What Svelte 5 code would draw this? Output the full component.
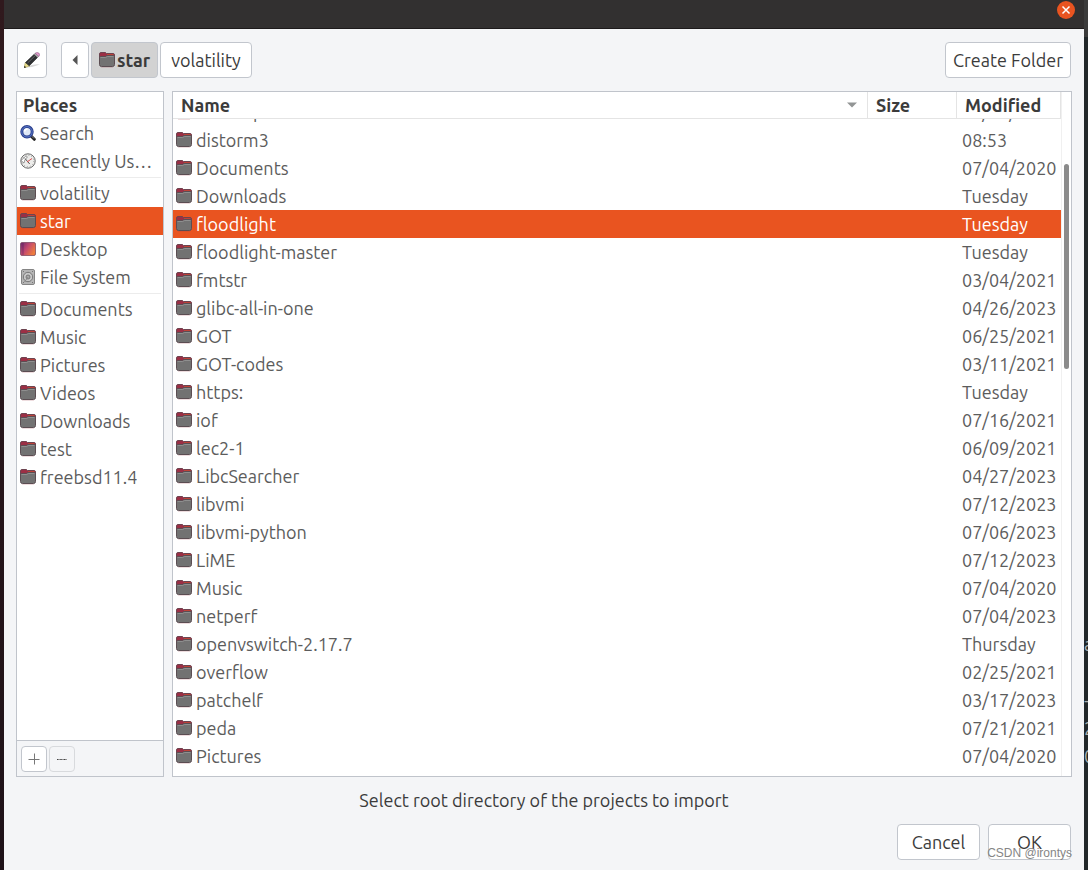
<script lang="ts">
    import {onMount} from "svelte";

    type Place = { name: string; icon: string };
    type Entry = { name: string; modified: string };

    const places: Place[][] = [
        [
            {name: "Search", icon: "search"},
            {name: "Recently Used", icon: "recent"},
        ],
        [
            {name: "volatility", icon: "folder"},
            {name: "star", icon: "folder"},
            {name: "Desktop", icon: "desktop"},
            {name: "File System", icon: "disk"},
        ],
        [
            {name: "Documents", icon: "folder"},
            {name: "Music", icon: "folder"},
            {name: "Pictures", icon: "folder"},
            {name: "Videos", icon: "folder"},
            {name: "Downloads", icon: "folder"},
            {name: "test", icon: "folder"},
            {name: "freebsd11.4", icon: "folder"},
        ],
    ];

    const entries: Entry[] = [
        {name: "Desktop", modified: "07/04/2020"},
        {name: "distorm3", modified: "08:53"},
        {name: "Documents", modified: "07/04/2020"},
        {name: "Downloads", modified: "Tuesday"},
        {name: "floodlight", modified: "Tuesday"},
        {name: "floodlight-master", modified: "Tuesday"},
        {name: "fmtstr", modified: "03/04/2021"},
        {name: "glibc-all-in-one", modified: "04/26/2023"},
        {name: "GOT", modified: "06/25/2021"},
        {name: "GOT-codes", modified: "03/11/2021"},
        {name: "https:", modified: "Tuesday"},
        {name: "iof", modified: "07/16/2021"},
        {name: "lec2-1", modified: "06/09/2021"},
        {name: "LibcSearcher", modified: "04/27/2023"},
        {name: "libvmi", modified: "07/12/2023"},
        {name: "libvmi-python", modified: "07/06/2023"},
        {name: "LiME", modified: "07/12/2023"},
        {name: "Music", modified: "07/04/2020"},
        {name: "netperf", modified: "07/04/2023"},
        {name: "openvswitch-2.17.7", modified: "Thursday"},
        {name: "overflow", modified: "02/25/2021"},
        {name: "patchelf", modified: "03/17/2023"},
        {name: "peda", modified: "07/21/2021"},
        {name: "Pictures", modified: "07/04/2020"},
    ];

    let place = $state("star");
    let selected = $state("floodlight");
    let scroller: HTMLDivElement;

    onMount(() => {
        scroller.scrollTop = scroller.scrollHeight;
    });
</script>

{#snippet icon(kind: string)}
    <svg class="icon" viewBox="0 0 16 16" aria-hidden="true">
        {#if kind === "folder"}
            <path d="M.5 6V2Q.5.5 2 .5h4.500l1 1H14q1.500 0 1.500 1.500v3z" fill="#9b2f45" stroke="#6d4450"/>
            <path d="M8 2.500h6.500v1H8z" fill="#e0562c"/>
            <path d="M.5 5.500Q.5 4.500 1.500 4.500h5L8 3.500h6.500q1 0 1 1V12.500q0 2-2 2h-11q-2 0-2-2z" fill="#727272" stroke="#5b4d52"/>
            <path d="M1.500 5.500h5.300L8.300 4.500h6.200" fill="none" stroke="#8f8f8f"/>
            <path d="M2 15.500h12" stroke="#a04050" stroke-opacity=".18"/>
        {:else if kind === "search"}
            <path d="M11 11l3.300 3.300" stroke="#222" stroke-width="3" stroke-linecap="round"/>
            <path d="M11.500 11l2.500 2.500" stroke="#888" stroke-width="1"/>
            <circle cx="7" cy="6.8" r="5.2" fill="#dfe8f7" stroke="#2b3f8c" stroke-width="3"/>
            <circle cx="7" cy="6.8" r="5.2" fill="none" stroke="#5a7acb" stroke-width="1"/>
            <path d="M4.500 6.500Q5 4 7.500 4" fill="none" stroke="#fff" stroke-width="1.500"/>
        {:else if kind === "recent"}
            <circle cx="8" cy="8" r="7.200" fill="#ededeb" stroke="#6b6b6b"/>
            <circle cx="8" cy="8" r="5.800" fill="none" stroke="#999" stroke-dasharray="1 2"/>
            <path d="M1 7.500L5.500 3.500l2 .6L5 6.500 4 10z" fill="#fff" stroke="#777" stroke-width=".7"/>
            <path d="M5 5.500L8 9l1.700 2" fill="none" stroke="#555"/>
            <path d="M7 9L12 5.500" stroke="#dc5050"/>
        {:else if kind === "desktop"}
            <defs>
                <linearGradient id="desk" x2="1" y2=".6">
                    <stop offset="0" stop-color="#6b286f"/>
                    <stop offset=".5" stop-color="#c3496f"/>
                    <stop offset="1" stop-color="#ef7d3d"/>
                </linearGradient>
            </defs>
            <rect x=".5" y="1.5" width="15" height="13" rx="1.5" fill="url(#desk)" stroke="#744057" stroke-opacity=".7"/>
            <path d="M3 2v12" stroke="#4d1f58" stroke-opacity=".5"/>
        {:else if kind === "disk"}
            <rect x="1.5" y=".5" width="13" height="15" rx="1.5" fill="#b5b5b5" stroke="#858585"/>
            <circle cx="8" cy="8" r="4.7" fill="#c9c9c9" stroke="#777"/>
            <circle cx="8" cy="8" r="2" fill="#aaa" stroke="#777"/>
            <path d="M8 8l-3.5 5" stroke="#888"/>
            <path d="M3 2.5h1M12 2.5h1M3 13.5h1M12 13.5h1" stroke="#777"/>
        {/if}
    </svg>
{/snippet}

<div class="screen">
    <div class="backdrop"></div>
    <div class="dialog">
        <header class="titlebar">
            <button class="close" aria-label="Close">
                <svg viewBox="0 0 18 18" aria-hidden="true">
                    <path d="M5.5 5.5l7 7M12.5 5.5l-7 7" stroke="#fff" stroke-width="1.5"/>
                </svg>
            </button>
        </header>
        <div class="content">
            <div class="toolbar">
                <button class="btn edit" aria-label="Type a file name">
                    <svg class="icon" viewBox="0 0 16 16" aria-hidden="true">
                        <path d="M2 15.5Q9 11.5 16 12.500L8 15z" fill="#000" fill-opacity=".15"/>
                        <path d="M0 16L1.300 10.500 5.500 14z" fill="#eadf8b" stroke="#a79d5c" stroke-width=".6"/>
                        <path d="M0 16l.5-2.200 1.700 1.500z" fill="#222"/>
                        <path d="M1.500 10.500L10.200 2.300 13.500 5.500 5.300 13.800z" fill="#2e3032" stroke="#1a1a1a" stroke-width=".6"/>
                        <path d="M3.500 11L11 3.800" stroke="#666"/>
                        <path d="M10.200 2.300l1.200-1.200 3.400 3.200-1.300 1.200z" fill="#aaa" stroke="#777" stroke-width=".5"/>
                        <path d="M11.200 1.300Q13-.3 14.900 1.100 16.500 2.700 14.800 4.500z" fill="#df9aca" stroke="#94628a" stroke-width=".6"/>
                    </svg>
                </button>
                <button class="btn back" aria-label="Back">
                    <svg class="icon" viewBox="0 0 16 16" aria-hidden="true">
                        <path d="M10.5 3v10L5.5 8z" fill="#555"/>
                    </svg>
                </button>
                <button class="btn crumb current">{@render icon("folder")}star</button>
                <button class="btn crumb">volatility</button>
                <button class="btn create">Create Folder</button>
            </div>

            <div class="panes">
                <nav class="pane places" aria-label="Places">
                    <h2>Places</h2>
                    <div class="groups">
                        {#each places as group}
                            <ul>
                                {#each group as p}
                                    <li>
                                        <button class="place" class:active={place === p.name} onclick={() => place = p.name}>
                                            {@render icon(p.icon)}
                                            <span>{p.name}</span>
                                        </button>
                                    </li>
                                {/each}
                            </ul>
                        {/each}
                    </div>
                    <div class="bookmarks">
                        <button class="btn small" aria-label="Add bookmark">
                            <svg viewBox="0 0 12 12" aria-hidden="true">
                                <path d="M.5 6.5h11M6.5.5v11" stroke="#777"/>
                            </svg>
                        </button>
                        <button class="btn small" aria-label="Remove bookmark" disabled>
                            <svg viewBox="0 0 12 12" aria-hidden="true">
                                <path d="M1 6.5h10" stroke="#444" stroke-dasharray="1 .4"/>
                            </svg>
                        </button>
                    </div>
                </nav>

                <div class="pane files">
                    <div class="scroller" bind:this={scroller}>
                        <table>
                            <thead>
                                <tr>
                                    <th>
                                        <div class="sort">
                                            Name
                                            <svg viewBox="0 0 10 6" aria-hidden="true"><path d="M0 .5h10L5 5.5z" fill="#929595"/></svg>
                                        </div>
                                    </th>
                                    <th class="size">Size</th>
                                    <th class="modified">Modified</th>
                                </tr>
                            </thead>
                            <tbody>
                                {#each entries as e}
                                    <tr class:active={selected === e.name} onclick={() => selected = e.name}>
                                        <td>
                                            <div class="file">{@render icon("folder")}{e.name}</div>
                                        </td>
                                        <td></td>
                                        <td class="date">{e.modified}</td>
                                    </tr>
                                {/each}
                            </tbody>
                        </table>
                    </div>
                    <div class="thumb"></div>
                </div>
            </div>

            <p class="hint">Select root directory of the projects to import</p>
            <div class="actions">
                <button class="btn action">Cancel</button>
                <button class="btn action">OK</button>
                <span class="watermark">CSDN @irontys</span>
            </div>
        </div>
    </div>
    <div class="backdrop terminal" aria-hidden="true">
        <span>a</span>
        <span></span>
        <span>-</span>
        <span>2</span>
        <span>0</span>
    </div>
</div>

<style>
    :global(body) {
        background: #221419;
    }

    .screen {
        display: grid;
        grid-template-columns: 4px 1fr 4px;
        height: 100vh;
        font-family: "Ubuntu", "Noto Sans", sans-serif;
        font-size: 18px;
        color: #3b3b3b;
    }

    .backdrop {
        background: linear-gradient(#30191d, #1e1218);
        overflow: hidden;
    }

    .terminal {
        display: flex;
        flex-direction: column;
        justify-content: flex-end;
        box-sizing: border-box;
        padding-bottom: 100px;
        background: linear-gradient(#3b3b3b 37px, #22282a 37px);
        color: #aab0b0;
    }

    .terminal span {
        height: 28px;
        line-height: 28px;
    }

    .dialog {
        display: flex;
        flex-direction: column;
        min-width: 0;
        min-height: 0;
        background: #f4f5f7;
    }

    .titlebar {
        display: flex;
        justify-content: flex-end;
        height: 28px;
        padding: 0 9px;
        background: #323030;
        border-bottom: 1px solid #1d1a1b;
    }

    .close {
        width: 18px;
        height: 18px;
        margin-top: 1px;
        padding: 0;
        border: 0;
        border-radius: 50%;
        background: #e95420;
    }

    .close svg {
        display: block;
    }

    .content {
        flex: 1;
        display: flex;
        flex-direction: column;
        min-height: 0;
        padding: 13px 12px 10px;
    }

    button {
        font: inherit;
        color: inherit;
    }

    .icon {
        flex: none;
        width: 16px;
        height: 16px;
    }

    .btn {
        display: flex;
        align-items: center;
        justify-content: center;
        box-sizing: border-box;
        height: 36px;
        padding: 0 7px;
        border: 1px solid #c2c6cd;
        border-radius: 4px;
        background: #fff;
        white-space: nowrap;
    }

    .toolbar {
        display: flex;
        gap: 2px;
        padding: 0 1px;
        margin-bottom: 13px;
    }

    .edit {
        width: 30px;
        margin-right: 12px;
    }

    .back {
        width: 28px;
    }

    .crumb {
        padding: 0 10px;
        gap: 2px;
    }

    .current {
        padding: 0 7px;
        background: #d2d2d2;
        font-weight: bold;
    }

    .create {
        margin-left: auto;
    }

    .panes {
        flex: 1;
        display: flex;
        gap: 8px;
        min-height: 0;
    }

    .pane {
        display: flex;
        flex-direction: column;
        box-sizing: border-box;
        background: #fff;
        border: 1px solid #c0c4cb;
    }

    .places {
        flex: none;
        width: 148px;
    }

    h2 {
        margin: 0;
        padding-left: 6px;
        border-bottom: 1px solid #e4e4e4;
        font-size: 18px;
        line-height: 26px;
    }

    .groups {
        flex: 1;
        overflow: hidden;
        color: #5c5c5c;
    }

    ul {
        margin: 0;
        padding: 0;
        list-style: none;
    }

    ul + ul::before {
        content: "";
        display: block;
        height: 1px;
        margin: 2px 2px 1px;
        background: #ececec;
    }

    .place {
        display: flex;
        align-items: center;
        gap: 4px;
        width: 100%;
        height: 28px;
        padding: 0 10px 0 3px;
        border: 0;
        background: none;
        text-align: left;
    }

    .place span {
        overflow: hidden;
        text-overflow: ellipsis;
        white-space: nowrap;
    }

    .active {
        background: #e95420;
        color: #fff;
    }

    .bookmarks {
        display: flex;
        gap: 2px;
        padding: 5px 4px 4px;
        border-top: 1px solid #c0c4cb;
        background: #f4f5f7;
    }

    .small {
        width: 26px;
        height: 26px;
        padding: 0;
    }

    .small svg {
        width: 12px;
        height: 12px;
    }

    .small:disabled {
        background: #f4f5f7;
        border-color: #d8dadd;
    }

    .files {
        position: relative;
        flex: 1;
        min-width: 0;
        padding-right: 9px;
    }

    .scroller {
        flex: 1;
        min-height: 0;
        overflow-y: auto;
        scrollbar-width: none;
        border-right: 1px solid #f0f0f0;
    }

    table {
        width: 100%;
        margin-bottom: 6px;
        table-layout: fixed;
        border-collapse: separate;
        border-spacing: 0;
        color: #5c5c5c;
    }

    th {
        position: sticky;
        top: 0;
        height: 26px;
        padding: 0 8px;
        background: #fff;
        border-right: 1px solid #e4e4e4;
        border-bottom: 1px solid #e4e4e4;
        color: #3b3b3b;
        line-height: 26px;
        text-align: left;
    }

    .size {
        width: 72px;
    }

    .modified {
        width: 87px;
    }

    .sort {
        display: flex;
        align-items: center;
        justify-content: space-between;
    }

    .sort svg {
        width: 10px;
        height: 6px;
        margin-right: 2px;
    }

    td {
        height: 28px;
        padding: 0 3px;
        line-height: 28px;
        white-space: nowrap;
    }

    .date {
        padding-left: 5px;
        padding-right: 0;
    }

    .file {
        display: flex;
        align-items: center;
        gap: 4px;
    }

    .thumb {
        position: absolute;
        top: 72px;
        right: 2px;
        width: 5px;
        height: 30%;
        border-radius: 3px;
        background: #8b8b8b;
    }

    .hint {
        margin: 11px 0 12px;
        line-height: 24px;
        text-align: center;
    }

    .actions {
        position: relative;
        display: flex;
        justify-content: flex-end;
        gap: 8px;
        padding-right: 1px;
    }

    .action {
        min-width: 83px;
    }

    .watermark {
        position: absolute;
        right: 0;
        bottom: 0;
        font: 12px/14px "Liberation Sans", Arial, sans-serif;
        color: #858585;
    }
</style>
